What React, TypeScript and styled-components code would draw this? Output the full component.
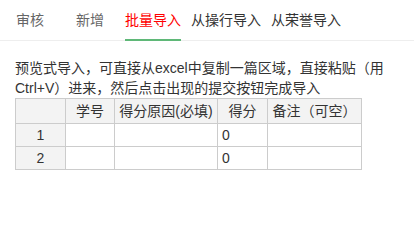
import React from 'react';
import styled, { createGlobalStyle } from 'styled-components';

const GlobalStyle = createGlobalStyle`
  html, body {
    margin: 0;
    padding: 0;
    background: #ffffff;
  }
  body {
    font-family: "Liberation Sans", Arial, "Noto Sans CJK SC", sans-serif;
    font-size: 14px;
    color: #333333;
  }
`;

type TabProps = {
  $active?: boolean;
  $dark?: boolean;
};

const tabs = [
  { label: '审核' },
  { label: '新增' },
  { label: '批量导入', active: true },
  { label: '从操行导入', dark: true },
  { label: '从荣誉导入', dark: true },
];

const columns = [
  { title: '', width: 50 },
  { title: '学号', width: 49 },
  { title: '得分原因(必填)', width: 103 },
  { title: '得分', width: 50 },
  { title: '备注（可空）', width: 94 },
];

const rows = [
  ['', '', '0', ''],
  ['', '', '0', ''],
];

export default function App() {
  return (
    <>
      <GlobalStyle />
      <Page>
        <TabBar>
          {tabs.map((t) => (
            <Tab key={t.label} $active={t.active} $dark={t.dark}>
              <TabLabel $active={t.active}>{t.label}</TabLabel>
            </Tab>
          ))}
        </TabBar>
        <Content>
          <Hint>
            预览式导入，可直接从excel中复制一篇区域，直接粘贴（用Ctrl+V）进来，然后点击出现的提交按钮完成导入
          </Hint>
          <Sheet>
            <colgroup>
              {columns.map((c, i) => (
                <col key={i} style={{ width: c.width }} />
              ))}
            </colgroup>
            <thead>
              <tr>
                {columns.map((c, i) => (
                  <HeadCell key={i}>{c.title}</HeadCell>
                ))}
              </tr>
            </thead>
            <tbody>
              {rows.map((r, i) => (
                <tr key={i}>
                  <RowHead>{i + 1}</RowHead>
                  {r.map((v, j) => (
                    <Cell key={j}>{v}</Cell>
                  ))}
                </tr>
              ))}
            </tbody>
          </Sheet>
        </Content>
      </Page>
    </>
  );
}

const Page = styled.div`
  width: 414px;
  height: 201px;
  overflow: hidden;
`;

const TabBar = styled.ul`
  display: flex;
  margin: 0;
  padding: 0;
  list-style: none;
  height: 40px;
  border-bottom: 1px solid #eeeeee;
  font-family: "Liberation Sans", "Noto Sans CJK SC", sans-serif;
`;

const Tab = styled.li<TabProps>`
  box-sizing: border-box;
  min-width: 60px;
  padding: 0 5px;
  height: 41px;
  display: flex;
  justify-content: center;
  font-size: 14px;
  line-height: 40px;
  color: ${(p) => (p.$active ? '#ff0000' : p.$dark ? '#333333' : '#666666')};
  cursor: pointer;
`;

const TabLabel = styled.span<{ $active?: boolean }>`
  display: block;
  height: 39px;
  border-bottom: 2px solid ${(p) => (p.$active ? '#5fb878' : 'transparent')};
`;

const Content = styled.div`
  padding: 17px 15px 0;
`;

const Hint = styled.p`
  margin: 0;
  font-size: 14px;
  line-height: 20px;
  color: #333333;
`;

const Sheet = styled.table`
  table-layout: fixed;
  border-collapse: collapse;
  width: 346px;
  font-size: 14px;
  color: #333333;
`;

const HeadCell = styled.th`
  height: 24px;
  padding: 0 4px;
  background: #f3f3f3;
  border: 1px solid #cccccc;
  font-weight: normal;
  text-align: center;
  white-space: nowrap;
  overflow: hidden;
  line-height: 24px;
`;

const RowHead = styled.td`
  height: 22px;
  padding: 0 4px;
  background: #f3f3f3;
  border: 1px solid #cccccc;
  text-align: center;
  line-height: 22px;
`;

const Cell = styled.td`
  height: 22px;
  padding: 0 4px;
  background: #ffffff;
  border: 1px solid #cccccc;
  text-align: left;
  line-height: 22px;
`;
